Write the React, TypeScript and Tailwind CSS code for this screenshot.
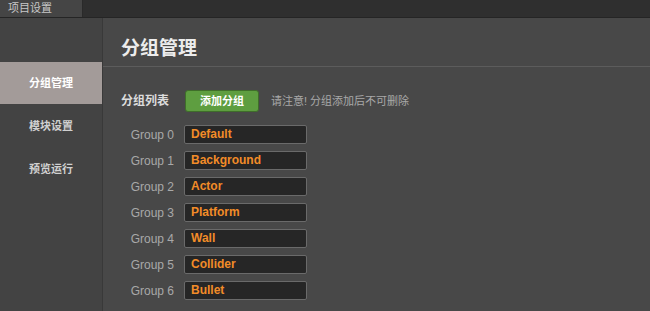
const groups = ['Default', 'Background', 'Actor', 'Platform', 'Wall', 'Collider', 'Bullet']

const navItems = ['分组管理', '模块设置', '预览运行']

const font = { fontFamily: '"Liberation Sans", "Noto Sans CJK SC", sans-serif' }

export default function App() {
  return (
    <div className="w-[650px] h-[311px] overflow-hidden flex flex-col bg-[#484848]" style={font}>
      {/* tab bar */}
      <div className="h-[18px] flex shrink-0 bg-[#2f2f2f] border-b border-[#252525]">
        <div className="w-[83px] bg-[#454545] border-r border-[#2a2a2a] text-[11px] leading-[17px] text-[#c8c8c8] pl-[8px]">
          项目设置
        </div>
      </div>

      <div className="flex flex-1 min-h-0">
        {/* sidebar */}
        <div className="w-[103px] shrink-0 bg-[#434343] border-r border-[#393939] pt-[44px]">
          {navItems.map((item, i) => (
            <div
              key={item}
              className={
                i === 0
                  ? 'h-[42px] flex items-center justify-center text-[11px] font-bold text-white bg-[#a39b99]'
                  : 'h-[43px] pt-[2px] flex items-center justify-center text-[11px] font-bold text-[#d0d0d0]'
              }
            >
              {item}
            </div>
          ))}
        </div>

        {/* main */}
        <div className="flex-1 flex flex-col">
          <div className="h-[49px] border-b border-[#5c5c5c] flex items-end pb-[8px] pl-[18px]">
            <h1 className="text-[19px] font-bold text-[#ececec] leading-none">分组管理</h1>
          </div>

          <div className="pl-[18px] pt-[23px]">
            <div className="flex items-center">
              <span className="shrink-0 text-[12px] font-bold text-[#dcdcdc] w-[64px]">分组列表</span>
              <button className="shrink-0 w-[74px] h-[22px] rounded-[3px] bg-[#5e9e40] border border-[#3f6e2a] text-[11px] font-bold text-white">
                添加分组
              </button>
              <span className="shrink-0 ml-[12px] text-[11px] text-[#a8a8a8]">请注意! 分组添加后不可删除</span>
            </div>

            <div className="mt-[13px] flex flex-col gap-[7px]">
              {groups.map((g, i) => (
                <div key={g} className="flex items-center">
                  <span className="shrink-0 w-[63px] text-right pr-[10px] text-[12px] text-[#a9a9a9]">Group {i}</span>
                  <div className="shrink-0 w-[123px] h-[19px] rounded-[2px] bg-[#262626] border border-[#6a6a6a] pl-[6px] text-[12px] font-bold leading-[17px] text-[#f28c28]">
                    {g}
                  </div>
                </div>
              ))}
            </div>
          </div>
        </div>
      </div>
    </div>
  )
}
